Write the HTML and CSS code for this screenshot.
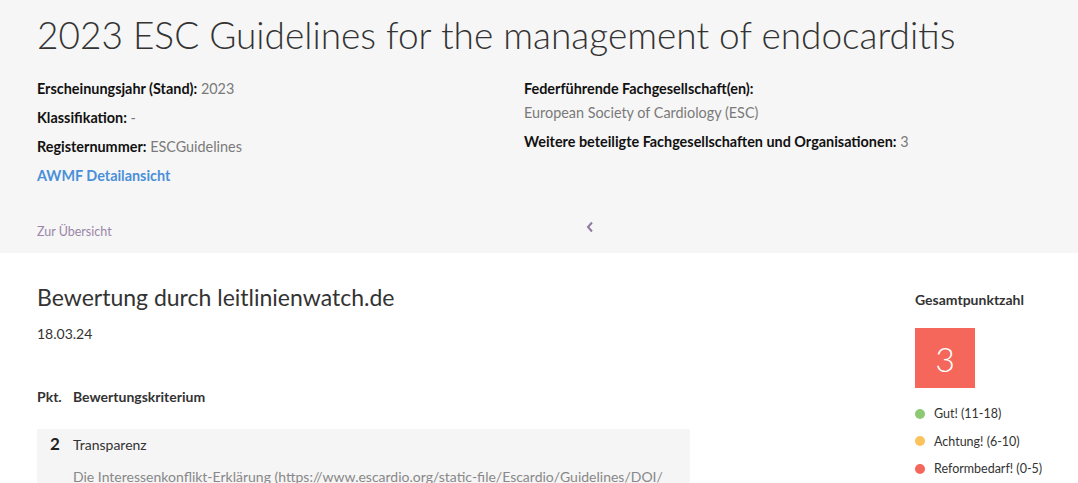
FILE: index.html
```html
<!DOCTYPE html>
<html lang="de">

<head>
    <meta charset="UTF-8">
    <meta name="viewport" content="width=device-width, initial-scale=1.0">
    <title>2023 ESC Guidelines - leitlinienwatch.de</title>
    <link rel="stylesheet" href="styles.css">
</head>

<body>
    <header class="guideline-head">
        <h1 class="guideline-title">2023 ESC Guidelines for the management of endocarditis</h1>

        <div class="meta">
            <div class="meta-col">
                <p><b>Erscheinungsjahr (Stand):</b> 2023</p>
                <p><b>Klassifikation:</b> -</p>
                <p><b>Registernummer:</b> ESCGuidelines</p>
                <p><a class="awmf-link" href="#">AWMF Detailansicht</a></p>
            </div>
            <div class="meta-col">
                <p class="tight"><b>Federführende Fachgesellschaft(en):</b></p>
                <p>European Society of Cardiology (ESC)</p>
                <p><b>Weitere beteiligte Fachgesellschaften und Organisationen:</b> 3</p>
            </div>
        </div>

        <div class="head-nav">
            <a class="back-link" href="#">Zur Übersicht</a>
            <svg class="chevron" width="8" height="12" viewBox="0 0 8 12">
                <path d="M6 1.5 L2 6 L6 10.5" fill="none" stroke="#8f7aa3" stroke-width="2" />
            </svg>
        </div>
    </header>

    <main class="rating">
        <section class="rating-main">
            <h2 class="rating-title">Bewertung durch leitlinienwatch.de</h2>
            <p class="rating-date">18.03.24</p>

            <div class="crit-head">
                <span class="pkt">Pkt.</span>
                <span>Bewertungskriterium</span>
            </div>

            <div class="crit-row">
                <div class="crit-top">
                    <span class="pkt">2</span>
                    <span class="crit-name">Transparenz</span>
                </div>
                <p class="crit-text">Die Interessenkonflikt-Erklärung (https://www.escardio.org/static-file/Escardio/Guidelines/DOI/</p>
            </div>
        </section>

        <aside class="score">
            <h3 class="score-title">Gesamtpunktzahl</h3>
            <div class="score-box">3</div>
            <ul class="legend">
                <li><span class="dot good"></span>Gut! (11-18)</li>
                <li><span class="dot warn"></span>Achtung! (6-10)</li>
                <li><span class="dot bad"></span>Reformbedarf! (0-5)</li>
            </ul>
        </aside>
    </main>
</body>

</html>
```

FILE: styles.css
```css
/* Grundlayout */
body {
    font-family: Lato, "Liberation Sans", sans-serif;
    background-color: #fff;
    color: #222;
    margin: 0;
    padding: 0;
}

p {
    margin: 0;
}

/* Kopfbereich */
.guideline-head {
    background-color: #f6f6f6;
    padding: 13px 37px 0;
    height: 240px;
}

.guideline-title {
    margin: 0;
    font-size: 37px;
    font-weight: 300;
    color: #333;
    line-height: 44px;
}

.meta {
    display: grid;
    grid-template-columns: 487px 1fr;
    margin-top: 22px;
}

.meta-col p {
    font-size: 14.4px;
    line-height: 20px;
    color: #7a7a7a;
    margin-bottom: 9px;
}

.meta-col p.tight {
    margin-bottom: 4px;
}

.meta-col b {
    color: #111;
    font-weight: 700;
}

.awmf-link {
    color: #4a90d9;
    font-weight: 700;
    text-decoration: none;
}

.head-nav {
    display: flex;
    align-items: center;
    margin-top: 24px;
}

.back-link {
    font-size: 12.5px;
    color: #9a86a8;
    text-decoration: none;
    width: 549px;
    padding-top: 5px;
}

.chevron {
    margin-top: -4px;
}

/* Bewertung */
.rating {
    display: grid;
    grid-template-columns: 653px 1fr;
    gap: 225px;
    padding: 30px 37px 0;
}

.rating-title {
    margin: 0;
    font-size: 23px;
    font-weight: 400;
    color: #333;
    line-height: 28px;
}

.rating-date {
    font-size: 14px;
    color: #333;
    margin-top: 14px;
}

.crit-head {
    display: flex;
    font-size: 14px;
    font-weight: 700;
    color: #333;
    margin-top: 46px;
}

.pkt {
    width: 36px;
    flex-shrink: 0;
}

.crit-row {
    background-color: #f5f5f5;
    margin-top: 24px;
    padding: 4px 13px 0;
    height: 64px;
}

.crit-top {
    display: flex;
    align-items: baseline;
}

.crit-top .pkt {
    font-size: 17px;
    font-weight: 700;
    width: 23px;
    color: #222;
}

.crit-name {
    font-size: 14px;
    color: #333;
}

.crit-text {
    font-size: 14px;
    color: #888;
    margin-top: 14px;
    margin-left: 23px;
    white-space: nowrap;
    overflow: hidden;
}

/* Gesamtpunktzahl */
.score {
    white-space: nowrap;
}

.score-title {
    margin: 8px 0 0;
    font-size: 14px;
    font-weight: 700;
    color: #333;
}

.score-box {
    width: 60px;
    height: 60px;
    margin-top: 20px;
    background-color: #f4675a;
    color: #fff;
    font-size: 34px;
    font-weight: 300;
    display: flex;
    align-items: center;
    justify-content: center;
}

.legend {
    list-style: none;
    margin: 12px 0 0;
    padding: 0;
}

.legend li {
    display: flex;
    align-items: center;
    font-size: 12.5px;
    color: #333;
    height: 27.5px;
}

.dot {
    width: 10px;
    height: 10px;
    border-radius: 50%;
    margin-right: 9px;
}

.dot.good {
    background-color: #8dc972;
}

.dot.warn {
    background-color: #fbc25e;
}

.dot.bad {
    background-color: #f4675a;
}
```
